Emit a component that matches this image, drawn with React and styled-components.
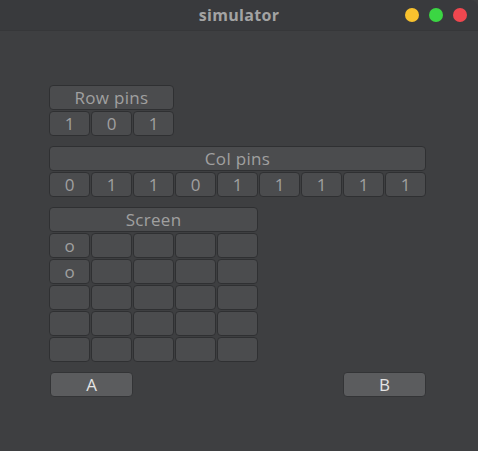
import React from "react";
import styled, { createGlobalStyle } from "styled-components";

const Global = createGlobalStyle`
  html, body { margin: 0; padding: 0; background: #3e3f41; }
  body { font-family: "Open Sans", "Noto Sans", sans-serif; }
`;

const Window = styled.div`
  width: 478px;
  height: 451px;
  background: #3e3f41;
  display: flex;
  flex-direction: column;
  overflow: hidden;
  border-top-right-radius: 8px;
`;

const TitleBar = styled.div`
  height: 30px;
  flex: none;
  background: #393a3d;
  border-bottom: 1px solid #363739;
  display: flex;
  align-items: center;
  justify-content: center;
  position: relative;
`;

const Title = styled.div`
  font-family: "Open Sans", "Noto Sans", sans-serif;
  font-weight: 700;
  font-size: 16px;
  color: #a3a3a3;
  letter-spacing: 0.3px;
`;

const Dots = styled.div`
  position: absolute;
  right: 11px;
  top: 8px;
  display: flex;
  gap: 10px;
`;

const Dot = styled.span`
  width: 14px;
  height: 14px;
  border-radius: 50%;
  background: ${(p) => p.$color};
`;

const Content = styled.div`
  padding: 54px 0 0 49px;
  width: 377px;
  display: flex;
  flex-direction: column;
  gap: 10px;
`;

const Grid = styled.div`
  display: grid;
  grid-template-columns: repeat(${(p) => p.$cols}, 41px);
  grid-auto-rows: 25px;
  gap: 1px;
`;

const Cell = styled.div`
  box-sizing: border-box;
  border: 1px solid #2f3032;
  border-radius: 4px;
  background: #4b4c4e;
  color: #a0a0a0;
  font-size: 17px;
  display: flex;
  align-items: center;
  justify-content: center;
  line-height: 1;
  padding-bottom: 1px;
`;

const Header = styled(Cell)`
  grid-column: 1 / -1;
  letter-spacing: 0.3px;
`;

const ButtonRow = styled.div`
  display: flex;
  justify-content: space-between;
  padding-left: 1px;
`;

const Button = styled.button`
  box-sizing: border-box;
  width: 83px;
  height: 25px;
  border: 1px solid #333436;
  border-radius: 4px;
  background: #5b5c5e;
  color: #e4e4e4;
  font-family: "Open Sans", "Noto Sans", sans-serif;
  font-size: 17px;
  padding: 0 0 1px;
  display: flex;
  align-items: center;
  justify-content: center;
`;

const rowPins = [1, 0, 1];
const colPins = [0, 1, 1, 0, 1, 1, 1, 1, 1];
const screen = [
  ["o", "", "", "", ""],
  ["o", "", "", "", ""],
  ["", "", "", "", ""],
  ["", "", "", "", ""],
  ["", "", "", "", ""],
];

export default function App() {
  return (
    <Window>
      <Global />
      <TitleBar>
        <Title>simulator</Title>
        <Dots>
          <Dot $color="#f8c12e" />
          <Dot $color="#3bd643" />
          <Dot $color="#f0474f" />
        </Dots>
      </TitleBar>
      <Content>
        <Grid $cols={3}>
          <Header>Row pins</Header>
          {rowPins.map((v, i) => (
            <Cell key={i}>{v}</Cell>
          ))}
        </Grid>
        <Grid $cols={9}>
          <Header>Col pins</Header>
          {colPins.map((v, i) => (
            <Cell key={i}>{v}</Cell>
          ))}
        </Grid>
        <Grid $cols={5}>
          <Header>Screen</Header>
          {screen.flat().map((v, i) => (
            <Cell key={i}>{v}</Cell>
          ))}
        </Grid>
        <ButtonRow>
          <Button>A</Button>
          <Button>B</Button>
        </ButtonRow>
      </Content>
    </Window>
  );
}
